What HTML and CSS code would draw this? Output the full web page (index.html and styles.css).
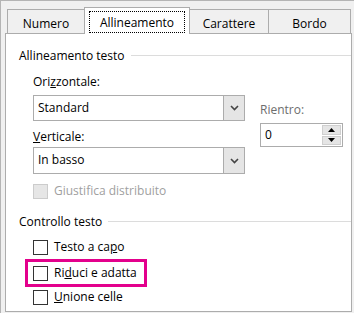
FILE: index.html
```html
<!DOCTYPE html>
<html lang="it">
<head>
    <meta charset="UTF-8">
    <title>Formato celle</title>
    <link rel="stylesheet" href="styles.css">
</head>
<body>

<div class="dialog">
    <div class="tabs">
        <div class="tab tab-numero">Numero</div>
        <div class="tab tab-active"><span class="focus">Allineamento</span></div>
        <div class="tab tab-carattere">Carattere</div>
        <div class="tab tab-bordo">Bordo</div>
    </div>

    <div class="panel">
        <div class="group-title">Allineamento testo</div>

        <div class="align-row">
            <div class="align-left">
                <div class="label">Ori<u>z</u>zontale:</div>
                <div class="combo combo-first">
                    <span class="combo-text">Standard</span>
                    <span class="combo-btn">
                        <svg width="9" height="6" viewBox="0 0 9 6"><path d="M1 1 L4.5 4.5 L8 1" fill="none" stroke="#444" stroke-width="1.6"/></svg>
                    </span>
                </div>
                <div class="label label-vert"><u>V</u>erticale:</div>
                <div class="combo combo-second">
                    <span class="combo-text">In basso</span>
                    <span class="combo-btn">
                        <svg width="9" height="6" viewBox="0 0 9 6"><path d="M1 1 L4.5 4.5 L8 1" fill="none" stroke="#444" stroke-width="1.6"/></svg>
                    </span>
                </div>
            </div>
            <div class="align-right">
                <div class="label muted">Rientro:</div>
                <div class="spin">
                    <span class="spin-text">0</span>
                    <span class="spin-btns">
                        <span class="spin-btn"><svg width="7" height="4" viewBox="0 0 7 4"><path d="M0 4 L3.5 0 L7 4 Z" fill="#000"/></svg></span>
                        <span class="spin-btn"><svg width="7" height="4" viewBox="0 0 7 4"><path d="M0 0 L3.5 4 L7 0 Z" fill="#000"/></svg></span>
                    </span>
                </div>
            </div>
        </div>

        <div class="check check-disabled">
            <span class="box"></span>
            <span>Giustifica distribuito</span>
        </div>

        <div class="group-title group-second">Controllo testo</div>

        <div class="checks">
            <div class="check">
                <span class="box"></span>
                <span>Testo a ca<u>p</u>o</span>
            </div>
            <div class="highlight">
                <div class="check">
                    <span class="box"></span>
                    <span>Ri<u>d</u>uci e adatta</span>
                </div>
            </div>
            <div class="check check-last">
                <span class="box"></span>
                <span><u>U</u>nione celle</span>
            </div>
        </div>
    </div>
</div>

</body>
</html>
```

FILE: styles.css
```css
body {
    margin: 0;
    width: 354px;
    height: 313px;
    overflow: hidden;
    background: #ffffff;
    font-family: "Open Sans", "Noto Sans", Arial, sans-serif;
    font-size: 12px;
    color: #000;
}
.dialog {
    box-sizing: border-box;
    height: 313px;
    background: #f0f0f0;
    border-top: 1px solid #b4b4b4;
    border-left: 1px solid #b4b4b4;
    padding-left: 4px;
}

/* linguette */
.tabs {
    display: flex;
    align-items: flex-end;
    padding-top: 6px;
    padding-left: 2px;
    height: 27px;
}
.tab {
    box-sizing: border-box;
    height: 24px;
    margin-bottom: 1px;
    margin-left: -1px;
    border: 1px solid #acacac;
    border-bottom: none;
    background: #f0f0f0;
    text-align: center;
    line-height: 16px;
    padding-top: 6px;
    color: #000;
}
.tab-numero {
    width: 78px;
    margin-left: 0;
}
.tab-carattere {
    width: 80px;
}
.tab-bordo {
    width: 83px;
}
.tab-active {
    position: relative;
    z-index: 1;
    width: 106px;
    height: 27px;
    margin-bottom: 0;
    background: #fff;
    padding-top: 3px;
}
.focus {
    display: block;
    box-sizing: border-box;
    height: 22px;
    margin: 0 4px;
    border: 1px dotted #000;
    padding-top: 2px;
    line-height: 18px;
}

/* pannello */
.panel {
    box-sizing: border-box;
    width: 347px;
    height: 279px;
    margin-top: -1px;
    background: #fff;
    border: 1px solid #acacac;
    padding: 14px 0 0 13px;
}
.group-title {
    display: flex;
    align-items: center;
    line-height: 16px;
}
.group-title::after {
    content: "";
    flex: 1;
    border-top: 1px solid #dcdcdc;
    margin-left: 6px;
    margin-top: -1px;
}
.group-second {
    margin-top: 15px;
}
.label {
    line-height: 16px;
}
.muted {
    color: #6d6d6d;
}
.align-row {
    display: flex;
    margin-left: 14px;
    margin-top: 10px;
}
.align-left {
    width: 212px;
}
.align-right {
    margin-left: 15px;
    padding-top: 28px;
}
.combo {
    box-sizing: border-box;
    display: flex;
    height: 26px;
    border: 1px solid #acacac;
    background: #fff;
}
.combo-first {
    margin-top: 5px;
}
.label-vert {
    margin-top: 8px;
}
.combo-second {
    margin-top: 2px;
    height: 27px;
}
.combo-text {
    flex: 1;
    padding-left: 4px;
    line-height: 23px;
}
.combo-btn {
    display: flex;
    align-items: center;
    justify-content: center;
    width: 20px;
    background: #e5e5e5;
    border-left: 1px solid #acacac;
}
.spin {
    box-sizing: border-box;
    display: flex;
    width: 83px;
    height: 24px;
    margin-top: 5px;
    border: 1px solid #acacac;
    background: #fff;
}
.spin-text {
    flex: 1;
    padding-left: 4px;
    line-height: 21px;
}
.spin-btns {
    display: flex;
    flex-direction: column;
    gap: 1px;
    padding: 1px;
}
.spin-btn {
    box-sizing: border-box;
    display: flex;
    align-items: center;
    justify-content: center;
    width: 19px;
    flex: 1;
    background: #e5e5e5;
    border: 1px solid #cfcfcf;
}

/* caselle di controllo */
.check {
    display: flex;
    align-items: center;
    gap: 6px;
    height: 16px;
    line-height: 16px;
}
.box {
    box-sizing: border-box;
    width: 15px;
    height: 15px;
    border: 1px solid #333;
    background: #fff;
}
.check-disabled {
    margin: 9px 0 0 14px;
    color: #a0a0a0;
}
.check-disabled .box {
    background: #e6e6e6;
    border-color: #cccccc;
}
.checks {
    margin-top: 9px;
    margin-left: 14px;
}
.highlight {
    width: fit-content;
    margin: 4px 0 0 -8px;
    border: 3px solid #e3008c;
    padding: 3px 7px 3px 5px;
}
.check-last {
    margin-top: 2px;
}
```
